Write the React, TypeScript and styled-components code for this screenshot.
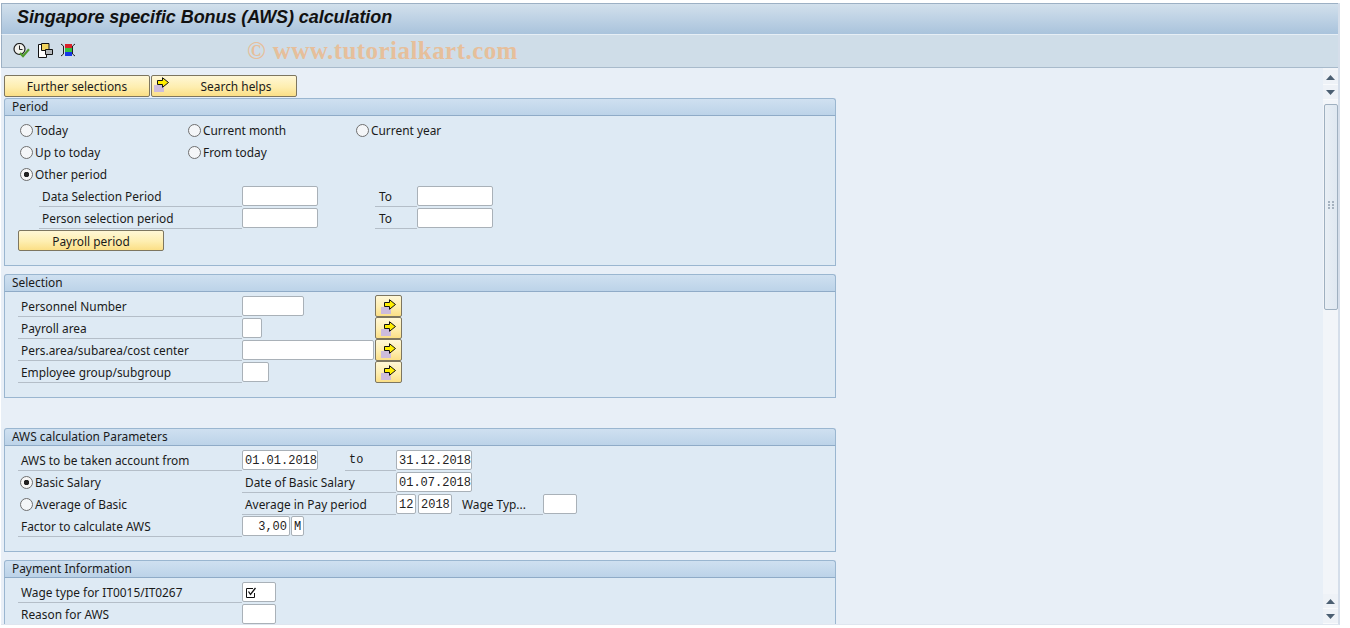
import React from "react";
import styled, { createGlobalStyle } from "styled-components";

const GlobalStyle = createGlobalStyle`
  html, body {
    margin: 0;
    padding: 0;
    background: #ffffff;
    overflow: hidden;
  }
  * { box-sizing: border-box; }
`;

function RunIcon() {
  return (
    <svg width="17" height="16" viewBox="0 0 17 16">
      <circle cx="6.5" cy="6" r="5.5" fill="#f1f1ec" stroke="#1c1c1c" strokeWidth="1.2" />
      <path d="M6.5 2.5V6.5H9.5" fill="none" stroke="#222" />
      <path d="M7 10l3 3.2 6-7" fill="none" stroke="#4f9a2c" strokeWidth="2.2" />
    </svg>
  );
}

function CopyIcon() {
  return (
    <svg width="17" height="16" viewBox="0 0 17 16">
      <path d="M2.5 1.5H10.5V14.5H2.5Z" fill="#fff" stroke="#111" />
      <path d="M5.5 .5H13V7.5H5.5Z" fill="#f0d35e" stroke="#111" />
      <path d="M9.5 6.5H16.5V11.5H9.5Z" fill="#b4b8bc" stroke="#111" />
    </svg>
  );
}

function LayoutIcon() {
  return (
    <svg width="16" height="16" viewBox="0 0 16 16">
      <path d="M1 1L3.5 3V11L1 13M15 1L12.5 3V11L15 13" fill="none" stroke="#222" />
      <rect x="5" y="1" width="7" height="4" fill="#d8232a" />
      <rect x="5" y="5" width="7" height="4" fill="#35c23f" />
      <rect x="5" y="9" width="7" height="4" fill="#1537e6" />
    </svg>
  );
}

function ArrowIcon() {
  return (
    <svg width="16" height="15" viewBox="0 0 16 15">
      <rect x="0" y="8" width="10" height="7" fill="#cdbcdc" />
      <path d="M3.5 3.5H8.5V.7L14.5 5.5L8.5 10.3V7.5H3.5Z" fill="#ffee00" stroke="#111" />
    </svg>
  );
}

function TickIcon() {
  return (
    <svg width="12" height="12" viewBox="0 0 12 12">
      <path d="M9.5 6V10.5H1.5V1.5H8" fill="none" stroke="#111" />
      <path d="M3.5 4.5L5.5 7.5L10.5 1" fill="none" stroke="#111" strokeWidth="1.3" />
    </svg>
  );
}

function Triangle({ down }: { down?: boolean }) {
  return (
    <svg width="9" height="5" viewBox="0 0 9 5">
      <path d={down ? "M0 0H9L4.5 5Z" : "M0 5H9L4.5 0Z"} fill="#4b5f72" />
    </svg>
  );
}

function RadioOption({ label, checked }: { label: string; checked?: boolean }) {
  return (
    <RadioItem>
      <RadioCircle $checked={checked} />
      {label}
    </RadioItem>
  );
}

export default function App() {
  return (
    <>
      <GlobalStyle />
      <Window>
        <TitleBar>Singapore specific Bonus (AWS) calculation</TitleBar>
        <Toolbar>
          <ToolIcon $w={23}><RunIcon /></ToolIcon>
          <ToolIcon $w={24}><CopyIcon /></ToolIcon>
          <ToolIcon $w={24}><LayoutIcon /></ToolIcon>
          <Watermark>© www.tutorialkart.com</Watermark>
        </Toolbar>
        <Content>
          <Main>
            <ButtonBar>
              <PushButton $w={146}>Further selections</PushButton>
              <PushButton $w={146} $iconGap={24}>
                <ButtonIcon><ArrowIcon /></ButtonIcon>
                Search helps
              </PushButton>
            </ButtonBar>

            <Section>
              <SectionHead>Period</SectionHead>
              <SectionBody $h={150}>
                <Row>
                  <RadioCell $w={168}><RadioOption label="Today" /></RadioCell>
                  <RadioCell $w={168}><RadioOption label="Current month" /></RadioCell>
                  <RadioCell $w={168}><RadioOption label="Current year" /></RadioCell>
                </Row>
                <Row>
                  <RadioCell $w={168}><RadioOption label="Up to today" /></RadioCell>
                  <RadioCell $w={168}><RadioOption label="From today" /></RadioCell>
                </Row>
                <Row>
                  <RadioCell $w={168}><RadioOption label="Other period" checked /></RadioCell>
                </Row>
                <Row>
                  <Label $w={203} $indent={34}>Data Selection Period</Label>
                  <Field $w={76} />
                  <Spacer $w={57} />
                  <ToLabel $w={42}>To</ToLabel>
                  <Field $w={76} />
                </Row>
                <Row>
                  <Label $w={203} $indent={34}>Person selection period</Label>
                  <Field $w={76} />
                  <Spacer $w={57} />
                  <ToLabel $w={42}>To</ToLabel>
                  <Field $w={76} />
                </Row>
                <Row>
                  <PayrollButton $w={146}>Payroll period</PayrollButton>
                </Row>
              </SectionBody>
            </Section>

            <Section>
              <SectionHead>Selection</SectionHead>
              <SectionBody $h={106}>
                <Row>
                  <Label $w={224} $indent={13}>Personnel Number</Label>
                  <FieldSlot><Field $w={62} /></FieldSlot>
                  <IconButton><ArrowIcon /></IconButton>
                </Row>
                <Row>
                  <Label $w={224} $indent={13}>Payroll area</Label>
                  <FieldSlot><Field $w={20} /></FieldSlot>
                  <IconButton><ArrowIcon /></IconButton>
                </Row>
                <Row>
                  <Label $w={224} $indent={13}>Pers.area/subarea/cost center</Label>
                  <FieldSlot><Field $w={132} /></FieldSlot>
                  <IconButton><ArrowIcon /></IconButton>
                </Row>
                <Row>
                  <Label $w={224} $indent={13}>Employee group/subgroup</Label>
                  <FieldSlot><Field $w={27} /></FieldSlot>
                  <IconButton><ArrowIcon /></IconButton>
                </Row>
              </SectionBody>
            </Section>

            <BlankLine />

            <Section>
              <SectionHead>AWS calculation Parameters</SectionHead>
              <SectionBody $h={106}>
                <Row>
                  <Label $w={224} $indent={13}>AWS to be taken account from</Label>
                  <Field $w={76}>01.01.2018</Field>
                  <Spacer $w={27} />
                  <MonoLabel $w={51}>to</MonoLabel>
                  <Field $w={76}>31.12.2018</Field>
                </Row>
                <Row>
                  <RadioCell $w={222}><RadioOption label="Basic Salary" checked /></RadioCell>
                  <Label $w={154}>Date of Basic Salary</Label>
                  <Field $w={76}>01.07.2018</Field>
                </Row>
                <Row>
                  <RadioCell $w={222}><RadioOption label="Average of Basic" /></RadioCell>
                  <Label $w={154}>Average in Pay period</Label>
                  <Field $w={20}>12</Field>
                  <Spacer $w={2} />
                  <Field $w={34}>2018</Field>
                  <Spacer $w={7} />
                  <Label $w={84}>Wage Typ...</Label>
                  <Field $w={34} />
                </Row>
                <Row>
                  <Label $w={224} $indent={13}>Factor to calculate AWS</Label>
                  <Field $w={48} $right>3,00</Field>
                  <Spacer $w={1} />
                  <Field $w={13}>M</Field>
                </Row>
              </SectionBody>
            </Section>

            <Section>
              <SectionHead>Payment Information</SectionHead>
              <SectionBody $h={106}>
                <Row>
                  <Label $w={224} $indent={13}>Wage type for IT0015/IT0267</Label>
                  <Field $w={34}><TickIcon /></Field>
                </Row>
                <Row>
                  <Label $w={224} $indent={13}>Reason for AWS</Label>
                  <Field $w={34} />
                </Row>
              </SectionBody>
            </Section>
          </Main>

          <Scrollbar>
            <ScrollButton><Triangle /></ScrollButton>
            <ScrollButton><Triangle down /></ScrollButton>
            <ScrollTrack>
              <ScrollThumb>
                <Grip />
                <Grip />
              </ScrollThumb>
            </ScrollTrack>
            <ScrollButton><Triangle /></ScrollButton>
            <ScrollButton><Triangle down /></ScrollButton>
          </Scrollbar>
        </Content>
      </Window>
    </>
  );
}

const uiFont = `"Noto Sans", "DejaVu Sans", sans-serif`;
const buttonFill = `linear-gradient(#fff7d6, #feeeb0 55%, #fbdf86)`;

const Window = styled.div`
  width: 1339px;
  height: 622px;
  margin: 3px 0 0 1px;
  border-right: 2px solid #d5deea;
  border-bottom: 1px solid #dfe6ef;
  display: flex;
  flex-direction: column;
  font-family: ${uiFont};
  font-size: 11.9px;
  color: #1a1a1a;
  background: #e8eff7;
`;

const TitleBar = styled.div`
  height: 32px;
  flex: none;
  padding: 0 0 3px 15px;
  display: flex;
  align-items: center;
  font-family: "Liberation Sans", Arial, sans-serif;
  font-weight: bold;
  font-style: italic;
  font-size: 18px;
  letter-spacing: -0.07px;
  color: #111;
  background: linear-gradient(#d2e0ec, #a9c3dc);
  border: 1px solid #9cb0c4;
  border-bottom: 1px solid #e6eef5;
  border-right-width: 0;
`;

const Toolbar = styled.div`
  height: 33px;
  flex: none;
  padding: 0 0 1px 11px;
  display: flex;
  align-items: center;
  background: #cfdde8;
  border-left: 1px solid #9cb0c4;
  border-bottom: 1px solid #a8bacb;
`;

const ToolIcon = styled.div<{ $w: number }>`
  width: ${(p) => p.$w}px;
  display: flex;
  align-items: center;
`;

const Watermark = styled.div`
  margin-left: 163px;
  font-family: "Liberation Serif", "Times New Roman", serif;
  font-weight: bold;
  font-size: 25px;
  letter-spacing: 0.45px;
  color: #e6bf9b;
  white-space: nowrap;
`;

const Content = styled.div`
  flex: 1;
  min-height: 0;
  display: flex;
`;

const Main = styled.div`
  flex: 1;
  min-width: 0;
  overflow: hidden;
  padding: 7px 0 0 3px;
`;

const ButtonBar = styled.div`
  display: flex;
  gap: 1px;
  height: 23px;
`;

const PushButton = styled.div<{ $w: number; $iconGap?: number }>`
  position: relative;
  width: ${(p) => p.$w}px;
  height: 22px;
  padding-left: ${(p) => p.$iconGap ?? 0}px;
  display: flex;
  align-items: center;
  justify-content: center;
  background: ${buttonFill};
  border: 1px solid #7d7660;
  border-radius: 2px;
  white-space: nowrap;
`;

const PayrollButton = styled(PushButton)`
  margin: 1px 0 0 13px;
  height: 21px;
`;

const ButtonIcon = styled.span`
  position: absolute;
  left: 2px;
  top: 1px;
  display: flex;
`;

const Section = styled.section`
  width: 832px;
  margin-bottom: 8px;
`;

const SectionHead = styled.div`
  height: 18px;
  padding: 0 0 2px 7px;
  display: flex;
  align-items: center;
  background: linear-gradient(#cfe0f0, #bcd3e8);
  border: 1px solid #9ab6d0;
  border-bottom-color: #8fabc7;
  border-radius: 3px 3px 0 0;
`;

const SectionBody = styled.div<{ $h: number }>`
  height: ${(p) => p.$h}px;
  padding: 3px 0 0 0;
  background: #deeaf4;
  border: 1px solid #9ab6d0;
  border-top: 0;
`;

const Row = styled.div`
  height: 22px;
  display: flex;
  align-items: center;
  white-space: nowrap;
`;

const RadioCell = styled.div<{ $w: number }>`
  width: ${(p) => p.$w}px;
  padding-left: 15px;
  flex: none;
  box-sizing: content-box;
  &:not(:first-child) {
    padding-left: 0;
  }
`;

const RadioItem = styled.div`
  display: flex;
  align-items: center;
  gap: 2px;
`;

const RadioCircle = styled.span<{ $checked?: boolean }>`
  width: 13px;
  height: 13px;
  flex: none;
  border-radius: 50%;
  border: 1px solid #6f6f6f;
  background: ${(p) =>
    p.$checked ? "radial-gradient(circle, #222 0 2.5px, #f6f6f6 3px)" : "#f4f6f8"};
`;

const Label = styled.div<{ $w: number; $indent?: number }>`
  flex: none;
  width: ${(p) => p.$w}px;
  margin-left: ${(p) => p.$indent ?? 0}px;
  height: 22px;
  line-height: 23px;
  padding-left: 3px;
  border-bottom: 1px solid #b4bec8;
  overflow: hidden;
`;

const ToLabel = styled(Label)`
  padding-left: 4px;
`;

const MonoLabel = styled(Label)`
  font-family: "Liberation Mono", monospace;
  padding-left: 4px;
`;

const Spacer = styled.div<{ $w: number }>`
  flex: none;
  width: ${(p) => p.$w}px;
`;

const FieldSlot = styled.div`
  flex: none;
  width: 133px;
`;

const Field = styled.div<{ $w: number; $right?: boolean }>`
  flex: none;
  width: ${(p) => p.$w}px;
  height: 20px;
  padding: 1px 2px 0;
  display: flex;
  align-items: center;
  justify-content: ${(p) => (p.$right ? "flex-end" : "flex-start")};
  background: #fff;
  border: 1px solid #a9b1b8;
  border-radius: 2px;
  font-family: "Liberation Mono", monospace;
  font-size: 12px;
  color: #222;
`;

const IconButton = styled.div`
  flex: none;
  width: 27px;
  height: 22px;
  display: flex;
  align-items: center;
  justify-content: center;
  background: ${buttonFill};
  border: 1px solid #7d7660;
  border-radius: 2px;
`;

const BlankLine = styled.div`
  height: 22px;
`;

const Scrollbar = styled.div`
  flex: none;
  width: 15px;
  padding-top: 2px;
  background: #f2f5f9;
  display: flex;
  flex-direction: column;
`;

const ScrollButton = styled.div`
  height: 15px;
  flex: none;
  display: flex;
  align-items: center;
  justify-content: center;
  background: #eef2f7;
  border-bottom: 1px solid #f8fafc;
`;

const ScrollTrack = styled.div`
  flex: 1;
  padding: 4px 0 0 1px;
`;

const ScrollThumb = styled.div`
  width: 14px;
  height: 206px;
  padding-bottom: 4px;
  display: flex;
  gap: 2px;
  align-items: center;
  justify-content: center;
  background: linear-gradient(90deg, #e9eff5, #dfe8f1);
  border: 1px solid #9fb0c0;
  border-radius: 2px;
`;

const Grip = styled.div`
  width: 2px;
  height: 8px;
  background: repeating-linear-gradient(#a5b2bf 0 2px, transparent 2px 3px);
`;
